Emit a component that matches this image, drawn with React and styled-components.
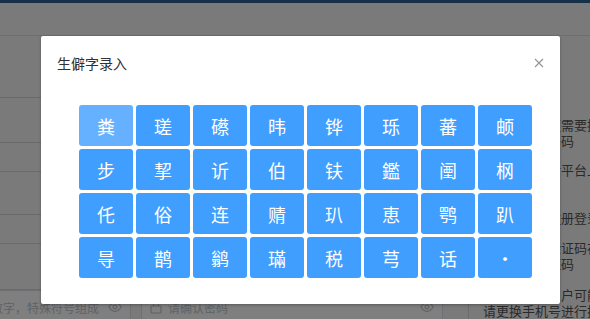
import React from "react";
import styled, { createGlobalStyle } from "styled-components";

const GlobalStyle = createGlobalStyle`
  html, body { margin: 0; padding: 0; }
  body {
    font-family: "Noto Sans CJK SC", "Noto Sans", "Liberation Sans", sans-serif;
    background: #f5f5f5;
  }
  * { box-sizing: border-box; }
`;

const Page = styled.div`
  width: 590px;
  height: 319px;
  overflow: hidden;
  position: relative;
  background: #f5f5f5;
`;

const TopBar = styled.div`
  height: 3px;
  background: #2c6094;
`;

const SubBar = styled.div`
  height: 33px;
  border-bottom: 1px solid #dcdcdc;
`;

const Body = styled.div`
  display: grid;
  grid-template-columns: 468px 1fr;
  height: 283px;
`;

const FormCol = styled.div`
  display: flex;
  flex-direction: column;
  padding-top: 61px;
`;

const FormBox = styled.div`
  height: ${(p) => p.$h}px;
  margin-left: -10px;
  width: 460px;
  border-top: 1px solid #d4d4d4;
  border-bottom: 1px solid #d4d4d4;
  background: #f5f5f5;
  margin-bottom: ${(p) => p.$mb}px;
`;

const InputRow = styled.div`
  display: flex;
  gap: 10px;
`;

const FakeInput = styled.div`
  display: flex;
  align-items: center;
  height: 34px;
  width: ${(p) => p.$w}px;
  margin-left: ${(p) => p.$ml || 0}px;
  padding: 0 8px;
  border: 1px solid #dcdfe6;
  border-radius: 4px;
  background: #ffffff;
  gap: 6px;
  font-size: 12px;
  color: #c0c4cc;
  white-space: nowrap;
  overflow: hidden;
`;

const Placeholder = styled.span`
  flex: 1;
  overflow: hidden;
`;

const NotesCol = styled.div`
  border-left: 1px solid #d4d4d4;
  padding: 81px 0 0 14px;
  font-size: 13px;
  line-height: 16px;
  color: #555;
  white-space: nowrap;
`;

const Note = styled.p`
  margin: 0 0 ${(p) => p.$mb}px 0;
`;

const Overlay = styled.div`
  position: absolute;
  inset: 0;
  background: rgba(0, 0, 0, 0.5);
`;

const Dialog = styled.div`
  position: absolute;
  left: 41px;
  top: 36px;
  width: 519px;
  height: 268px;
  background: #ffffff;
  border-radius: 2px;
  box-shadow: 0 1px 3px rgba(0, 0, 0, 0.3);
  display: flex;
  flex-direction: column;
`;

const DialogHeader = styled.div`
  display: flex;
  justify-content: space-between;
  align-items: center;
  padding: 16px 16px 0 16px;
  height: 38px;
`;

const Title = styled.span`
  font-size: 14px;
  line-height: 22px;
  color: #303133;
`;

const CloseBtn = styled.button`
  border: 0;
  background: transparent;
  padding: 0;
  width: 10px;
  height: 10px;
  display: flex;
  cursor: pointer;
`;

const KeyGrid = styled.div`
  display: grid;
  grid-template-columns: repeat(8, 54px);
  grid-auto-rows: 41px;
  gap: 3px;
  margin: 31px 0 0 38px;
`;

const Key = styled.button`
  border: 0;
  border-radius: 3px;
  background: ${(p) => (p.$active ? "#66b1ff" : "#409eff")};
  color: #ffffff;
  font-family: "Noto Sans CJK SC", sans-serif;
  font-size: 18px;
  padding: 0;
  display: flex;
  align-items: center;
  justify-content: center;
  cursor: pointer;
`;

const chars = [
  "粪", "瑳", "礤", "𬀩", "铧", "𬍛", "蕃", "𬱖",
  "步", "挈", "䜣", "伯", "𫓧", "鑑", "𬮱", "㭎",
  "仛", "俗", "连", "䞍", "玐", "恵", "鹗", "趴",
  "㝵", "鹊", "鹟", "璊", "税", "芎", "话", "·",
];

const EyeIcon = () => (
  <svg width="14" height="14" viewBox="0 0 16 16" fill="none" stroke="#c0c4cc" strokeWidth="1.3">
    <path d="M1 8c2-3.5 4.5-5 7-5s5 1.5 7 5c-2 3.5-4.5 5-7 5S3 11.5 1 8z" />
    <circle cx="8" cy="8" r="2.2" />
  </svg>
);

const LockIcon = () => (
  <svg width="12" height="13" viewBox="0 0 12 13" fill="none" stroke="#c0c4cc" strokeWidth="1.2">
    <rect x="1" y="5" width="10" height="7" rx="1" />
    <path d="M3.5 5V3.5a2.5 2.5 0 0 1 5 0V5" />
  </svg>
);

export default function App() {
  return (
    <>
      <GlobalStyle />
      <Page>
        <TopBar />
        <SubBar />
        <Body>
          <FormCol>
            <FormBox $h={46} $mb={28} />
            <FormBox $h={44} $mb={28} />
            <FormBox $h={47} $mb={0} />
            <InputRow>
              <FakeInput $w={185} $ml={-54}>
                <Placeholder>字母、数字，特殊符号组成</Placeholder>
                <EyeIcon />
              </FakeInput>
              <FakeInput $w={302}>
                <LockIcon />
                <Placeholder>请确认密码</Placeholder>
                <EyeIcon />
              </FakeInput>
            </InputRow>
          </FormCol>
          <NotesCol>
            <Note $mb={13}>手机号已变更需要换绑手机号<br />请输入新的号码</Note>
            <Note $mb={32}>绑定成功以后平台上的信息将同步</Note>
            <Note $mb={14}>新手机号未注册登录过</Note>
            <Note $mb={15}>请输入收到验证码在有效期内<br />输入手机验证码</Note>
            <Note $mb={0}>该号码的原用户可能被影响，<br />请更换手机号进行换绑</Note>
          </NotesCol>
        </Body>
        <Overlay />
        <Dialog>
          <DialogHeader>
            <Title>生僻字录入</Title>
            <CloseBtn aria-label="close">
              <svg width="10" height="10" viewBox="0 0 10 10" stroke="#909399" strokeWidth="1.1">
                <path d="M1 1L9 9M9 1L1 9" />
              </svg>
            </CloseBtn>
          </DialogHeader>
          <KeyGrid>
            {chars.map((c, i) => (
              <Key key={i} $active={i === 0}>{c}</Key>
            ))}
          </KeyGrid>
        </Dialog>
      </Page>
    </>
  );
}
